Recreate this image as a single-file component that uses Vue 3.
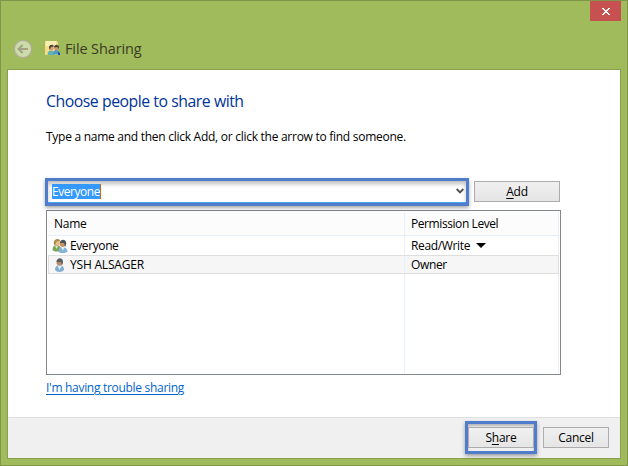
<template>
    <div class="window">
        <div class="caption">
            <button class="close" aria-label="Close">
                <svg width="8" height="7" viewBox="0 0 8 7" shape-rendering="crispEdges">
                    <path d="M0 0h2v1h1v1h2v-1h1v-1h2v1h-1v1h-1v1h-1v1h1v1h1v1h1v1h-2v-1h-1v-1h-2v1h-1v1h-2v-1h1v-1h1v-1h1v-1h-1v-1h-1v-1h-1z" fill="#fff" />
                </svg>
            </button>
        </div>
        <div class="nav">
            <svg class="back" width="20" height="20" viewBox="0 0 20 20">
                <circle cx="10" cy="10" r="8.7" fill="#cbdbaa" stroke="#b1ad91" stroke-width="1.4" />
                <path d="M15 10H6M9.6 6L5.6 10l4 4" fill="none" stroke="#a6a183" stroke-width="2" />
            </svg>
            <svg class="share-icon" width="16" height="16" viewBox="0 0 16 16">
                <path d="M0 1h12l1 2v12H0z" fill="#f9dc88" />
                <path d="M1 1h10v5H1z" fill="#fdeeb4" />
                <path d="M2.500 15c0-3 1-4.500 3.500-4.500s3.500 1.500 3.500 4.500z" fill="#62b3ad" />
                <path d="M8 14.500c0-3 1-4.500 3.200-4.500s3.800 1.500 3.800 4.500z" fill="#4d9cc4" />
                <circle cx="6.500" cy="8.300" r="2.300" fill="#d7a37b" />
                <circle cx="11.500" cy="8" r="2.300" fill="#c99270" />
                <path d="M4 8c-.3-4 4.700-4 5-1.500L6 7 5 9.500zM9 7.500c0-4 5-3.500 5-.5l-.5 2-1-2z" fill="#4b4437" />
                <path d="M13 12l2 1v2h-2z" fill="#2046a5" />
            </svg>
            <span class="title">File Sharing</span>
        </div>

        <div class="client">
            <div class="content">
                <h1>Choose people to share with</h1>
                <p class="hint">Type a name and then click Add, or click the arrow to find someone.</p>

                <div class="picker">
                    <div class="combo">
                        <span class="selected">Everyone</span>
                        <svg width="8" height="6" viewBox="0 0 8 6">
                            <path d="M.7 1L4 4.400 7.300 1" fill="none" stroke="#505050" stroke-width="1.900" />
                        </svg>
                    </div>
                    <button class="btn add"><span><u>A</u>dd</span></button>
                </div>

                <div class="list">
                    <div class="row head">
                        <div class="name">Name</div>
                        <div class="level">Permission Level</div>
                    </div>
                    <div v-for="p in people" :key="p.name" :class="['row', { active: p.active }]">
                        <div class="name">
                            <svg v-if="p.group" width="16" height="16" viewBox="0 0 16 16">
                                <path d="M.5 12c0-3.500 1.500-5 4-5s4.500 1.500 4.500 5c-2 2-6.500 2-8.500 0z" fill="#7da354" />
                                <path d="M3 8l1.500 3L6 8z" fill="#dfe9cf" />
                                <circle cx="5" cy="4.800" r="3" fill="#e9bd88" />
                                <path d="M1.800 6.500C1 0 8 0 8 3L4.500 3.500 3.200 7z" fill="#a98c4a" />
                                <path d="M6.500 14c0-3.500 1.500-5 4-5s5 1.500 5 4.500c-2 2-7 2-9 .5z" fill="#83b5db" />
                                <path d="M9 9l2 3.500L12.500 9z" fill="#e9f3fa" />
                                <circle cx="10.600" cy="6" r="2.900" fill="#c98f66" />
                                <path d="M8 5C8 .5 14.500.5 14.300 5.500L13.300 9 12 5z" fill="#4e5455" />
                            </svg>
                            <svg v-else width="16" height="16" viewBox="0 0 16 16">
                                <path d="M3 13c0-3.500 2-5 4.500-5s4.500 1.500 4.500 5c-2 2.500-7 2.500-9 0z" fill="#83aed0" />
                                <path d="M5.500 8.500l2 4.500 2.500-4.500z" fill="#e3eff8" />
                                <circle cx="7.500" cy="5.500" r="3" fill="#bd8965" />
                                <path d="M4.500 5C4.500 0 11.500 0 11 5.500L10 8.500 9 5z" fill="#596064" />
                            </svg>
                            <span>{{ p.name }}</span>
                        </div>
                        <div class="level">
                            <span>{{ p.level }}</span>
                            <i v-if="p.menu" class="arrow"></i>
                        </div>
                    </div>
                    <div class="row rest">
                        <div class="name"></div>
                        <div class="level"></div>
                    </div>
                </div>

                <a class="help">I'm having trouble sharing</a>
            </div>

            <div class="footer">
                <div class="mark"><button class="btn"><span>S<u>h</u>are</span></button></div>
                <button class="btn cancel"><span>Cancel</span></button>
            </div>
        </div>
    </div>
</template>

<script setup>
import { ref } from 'vue';

const people = ref([
    { name: 'Everyone', level: 'Read/Write', group: true, menu: true },
    { name: 'YSH ALSAGER', level: 'Owner', active: true }
]);
</script>

<style>
body {
    background: #a0bb5c;
}
</style>

<style scoped>
* {
    box-sizing: border-box;
}
.window {
    width: 628px;
    height: 466px;
    padding: 0 7px 6px 6px;
    border: 1px solid #7f9549;
    background: #a0bb5c;
    font: 12px/16px "Open Sans", "Noto Sans", sans-serif;
    letter-spacing: -0.27px;
    color: #000;
    overflow: hidden;
    display: flex;
    flex-direction: column;
}
button {
    font: inherit;
    letter-spacing: inherit;
    color: inherit;
    padding: 0;
}
.caption {
    height: 36px;
    display: flex;
    justify-content: flex-end;
}
.close {
    width: 31px;
    height: 20px;
    margin-right: -1px;
    border: 0;
    background: #c75050;
    display: flex;
    align-items: center;
    justify-content: center;
}
.nav {
    height: 32px;
    padding-left: 6px;
    display: flex;
    align-items: flex-start;
}
.back {
    margin-top: 2px;
}
.share-icon {
    margin: 3px 0 0 12px;
}
.title {
    margin: 2px 0 0 4px;
    font-size: 14.5px;
    line-height: 20px;
    letter-spacing: -0.12px;
    color: #3b3c24;
}
.client {
    width: 614px;
    flex: 1;
    border: 1px solid #8aa04e;
    background: #fff;
    display: flex;
    flex-direction: column;
}
.content {
    flex: 1;
    padding: 20px 59px 0 38px;
}
h1 {
    margin: 0;
    font-size: 15.8px;
    font-weight: 400;
    line-height: 22px;
    letter-spacing: -0.46px;
    color: #003399;
    white-space: nowrap;
}
.hint {
    margin: 17px 0 0;
    white-space: nowrap;
}
.picker {
    display: flex;
    align-items: flex-start;
    margin: 33px 0 4px -1px;
}
.combo {
    width: 424px;
    height: 28px;
    padding: 0 2px 2px 4px;
    border: 3px solid #4f7dcb;
    background: #fff;
    box-shadow: 0 2px 4px rgba(0, 0, 0, .35), inset 0 -1px #49a0e8, inset 0 3px 4px rgba(0, 0, 0, .25);
    display: flex;
    align-items: center;
    justify-content: space-between;
}
.selected {
    height: 15px;
    line-height: 15px;
    letter-spacing: -0.45px;
    background: #3399ff;
    color: #fff;
    border-right: 1px solid #c66a12;
}
.btn {
    width: 66px;
    height: 21px;
    border: 1px solid #acacac;
    background: linear-gradient(#f0f0f0, #e5e5e5);
    display: flex;
    align-items: center;
    justify-content: center;
}
.btn u {
    text-underline-offset: 2px;
}
.btn.add {
    width: 86px;
    margin: 3px 0 0 5px;
}
.list {
    width: 515px;
    height: 165px;
    padding: 1px;
    border: 1px solid #828790;
    display: flex;
    flex-direction: column;
}
.row {
    width: 511px;
    height: 19px;
    display: flex;
    border-right: 1px solid #e8f0fa;
}
.row > div {
    display: flex;
    align-items: center;
}
.name {
    width: 357px;
    padding-left: 4px;
    border-right: 1px solid #e8f0fa;
}
.name svg {
    margin-right: 2px;
}
.level {
    flex: 1;
    padding-left: 6px;
    letter-spacing: -0.35px;
}
.head {
    height: 24px;
    background: #fcfcfc;
    border-bottom: 1px solid #e8eef6;
}
.head > div {
    padding-top: 1px;
}
.head .name {
    padding-left: 6px;
}
.head .level {
    letter-spacing: -0.42px;
}
.row .name span {
    letter-spacing: -0.4px;
}
.active {
    background: #f6f6f6;
    border: 1px solid #dedede;
}
.active .name {
    width: 356px;
    padding-left: 3px;
}
.row.active .name span {
    letter-spacing: -0.2px;
}
.rest {
    flex: 1;
}
.arrow {
    margin-left: 6px;
    border: 5px solid transparent;
    border-top-color: #000;
    border-bottom: 0;
}
.help {
    display: inline-block;
    margin-top: 5px;
    color: #0066cc;
    letter-spacing: -0.3px;
    text-decoration: underline;
    text-underline-offset: 2px;
}
.footer {
    height: 41px;
    padding: 3px 11px 0 0;
    border-top: 1px solid #dfdfdf;
    background: #f0f0f0;
    display: flex;
    align-items: flex-start;
    justify-content: flex-end;
}
.mark {
    width: 72px;
    height: 33px;
    padding-top: 3px;
    border: 3px solid #4f7dcb;
    box-shadow: 0 2px 4px rgba(0, 0, 0, .35), inset 0 2px 3px rgba(0, 0, 0, .25);
}
.cancel {
    margin: 6px 0 0 6px;
}
</style>
